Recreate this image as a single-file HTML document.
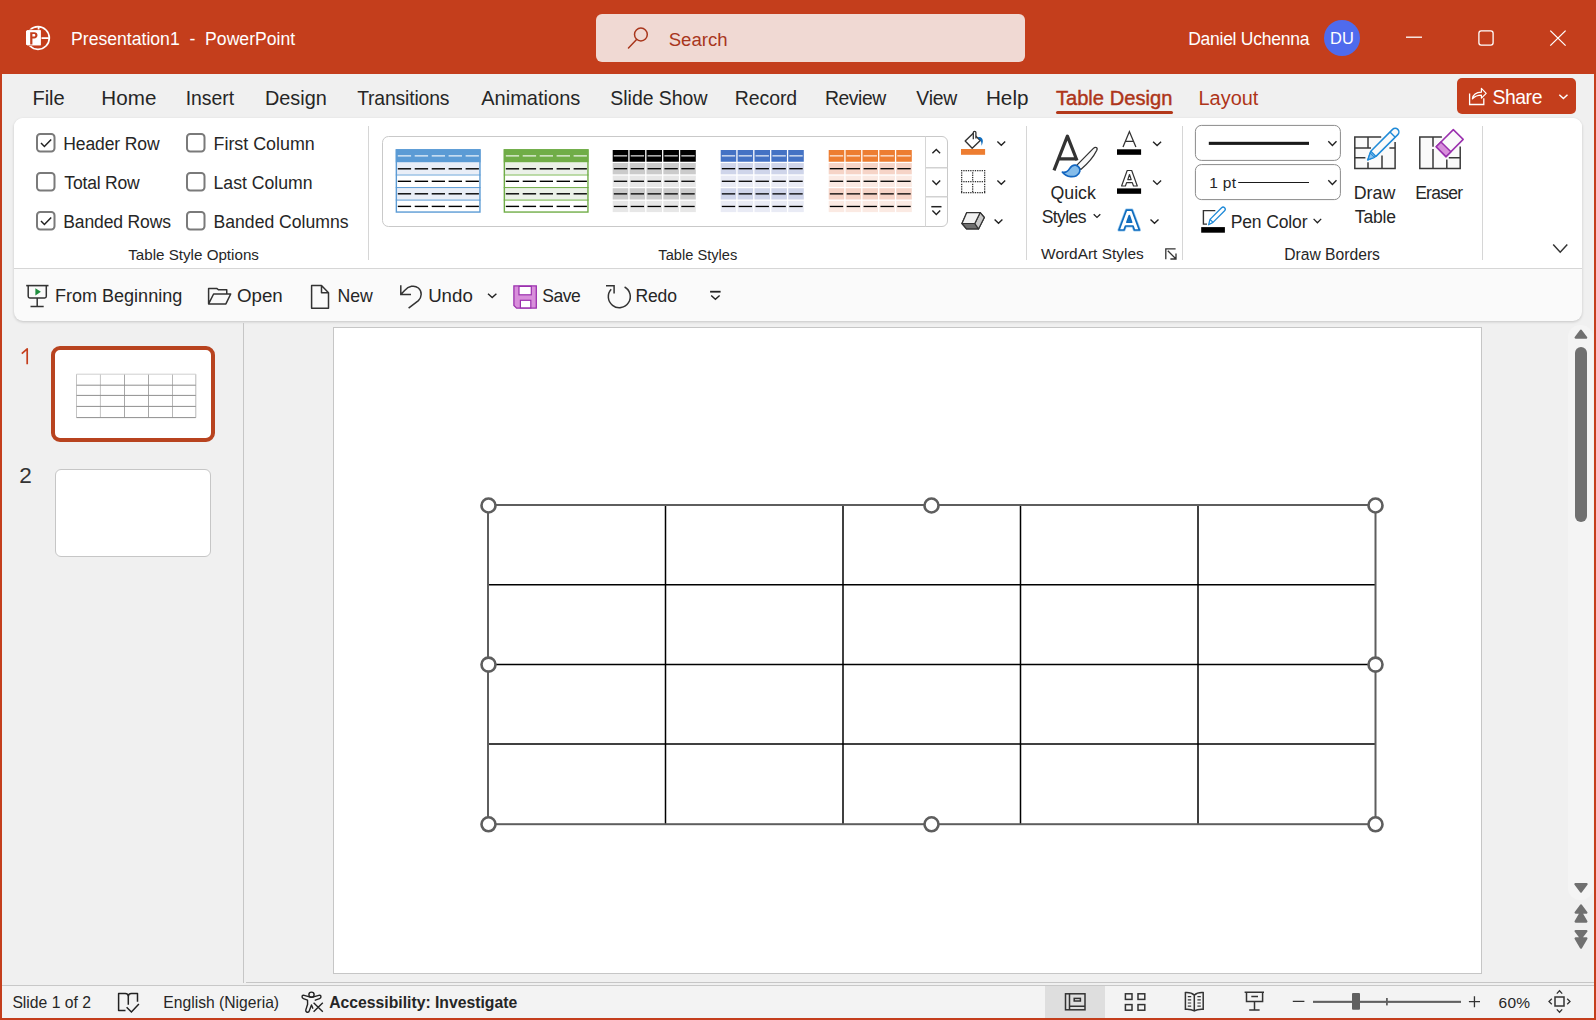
<!DOCTYPE html>
<html><head><meta charset="utf-8"><title>PowerPoint</title>
<style>
html,body{margin:0;padding:0;}
body{width:1596px;height:1020px;overflow:hidden;position:relative;background:#F0F0F0;font-family:"Liberation Sans",sans-serif;}
.t{position:absolute;white-space:pre;line-height:30px;font-family:"Liberation Sans",sans-serif;}
.a{position:absolute;}
svg{position:absolute;overflow:visible;}
</style></head><body>

<div class="a" style="left:0;top:0;width:1596px;height:74px;background:#C43E1C"></div>
<div class="a" style="left:0;top:0;width:2px;height:1020px;background:#C43E1C"></div>
<div class="a" style="left:1594px;top:0;width:2px;height:1020px;background:#C43E1C"></div>
<div class="a" style="left:0;top:1018px;width:1596px;height:2px;background:#C43E1C"></div>
<div class="a" style="left:596px;top:14px;width:429px;height:48px;border-radius:6px;background:#F0D9D3"></div>
<div class="a" style="left:1324px;top:20px;width:36px;height:36px;border-radius:50%;background:#4F6BED"></div>
<div class="a" style="left:1457px;top:78px;width:119px;height:36px;border-radius:5px;background:#C43E1C"></div>
<div class="a" style="left:1056px;top:111px;width:117px;height:3px;border-radius:2px;background:#B3381A"></div>
<div class="a" style="left:14px;top:118px;width:1568px;height:203px;border-radius:9px;background:#FAFAFA;box-shadow:0 1px 3px rgba(0,0,0,0.18);overflow:hidden">
  <div class="a" style="left:0;top:0;width:1568px;height:150px;background:#fff;border-bottom:1px solid #D6D6D6"></div>
</div>
<div class="a" style="left:368px;top:126px;width:1px;height:134px;background:#D6D6D6"></div>
<div class="a" style="left:1026px;top:126px;width:1px;height:134px;background:#D6D6D6"></div>
<div class="a" style="left:1182px;top:126px;width:1px;height:134px;background:#D6D6D6"></div>
<div class="a" style="left:1482px;top:126px;width:1px;height:134px;background:#D6D6D6"></div>
<div class="a" style="left:243px;top:323px;width:1px;height:660px;background:#C6C6C6"></div>
<div class="a" style="left:246px;top:982px;width:1348px;height:1px;background:#C6C6C6"></div>
<div class="a" style="left:2px;top:985px;width:1592px;height:33px;background:#F3F3F3;border-top:1px solid #C8C8C8;box-sizing:border-box"></div>
<div class="a" style="left:333px;top:327px;width:1149px;height:647px;background:#fff;border:1px solid #C6C6C6;box-sizing:border-box"></div>
<div class="a" style="left:51px;top:346px;width:164px;height:96px;border-radius:9px;background:#fff;border:4px solid #B8431F;box-sizing:border-box"></div>
<div class="a" style="left:55px;top:469px;width:156px;height:88px;border-radius:6px;background:#fff;border:1px solid #C6C6C6;box-sizing:border-box"></div>
<div class="a" style="left:1568px;top:325px;width:25px;height:575px;border-radius:12px;background:#F4F4F4"></div>
<div class="a" style="left:1575px;top:347px;width:12px;height:175px;border-radius:6px;background:#707070"></div>

<svg width="1596" height="1020" style="left:0;top:0"><circle cx="38" cy="38" r="11.3" fill="none" stroke="#fff" stroke-width="1.7"/>
<path d="M38.6 26.5V38.2H50" fill="none" stroke="#fff" stroke-width="1.8"/>
<path d="M27.3 30.2H40.7V45.2H27.3L26 44.2V31.2Z" fill="#fff" stroke="#C43E1C" stroke-width="1.6" paint-order="stroke"/>
<path d="M27.3 30.2H40.7V45.2H27.3L26 44.2V31.2Z" fill="#fff"/>
<path d="M30.2 44.6V32.2H34.2C36.3 32.2 37.5 33.4 37.5 35.3C37.5 37.3 36.2 38.5 34.1 38.5H32.4V44.6Z M32.4 34.1V36.6H33.8C34.8 36.6 35.3 36.2 35.3 35.35C35.3 34.5 34.8 34.1 33.8 34.1Z" fill="#C43E1C" fill-rule="evenodd"/>
<circle cx="640.9" cy="34.5" r="6.4" fill="none" stroke="#A8361C" stroke-width="1.5"/>
<path d="M636.6 39.6L628.5 47.9" stroke="#A8361C" stroke-width="1.5" stroke-linecap="round"/>
<path d="M1406 37.2H1422" stroke="#fff" stroke-width="1.3"/>
<rect x="1478.9" y="30.9" width="14.2" height="14.2" rx="2.3" fill="none" stroke="#fff" stroke-width="1.3"/>
<path d="M1550.3 30.6L1565.6 45.6M1565.6 30.6L1550.3 45.6" stroke="#fff" stroke-width="1.3"/>
<path d="M1469.6 93.4V104.5H1483.8V98.2" fill="none" stroke="#fff" stroke-width="1.3"/>
<path d="M1472.4 98.8C1473 94.6 1476 92.4 1481.4 92.2V88.4L1486.2 93.3L1481.4 98.1V95.2C1477.6 95.2 1474.8 96.4 1472.4 98.8Z" fill="none" stroke="#fff" stroke-width="1.2" stroke-linejoin="round"/>
<path d="M1559.3000000000002 94.75L1563.4 98.44999999999999L1567.5 94.75" fill="none" stroke="#fff" stroke-width="1.5"/>
<rect x="37" y="134" width="17.5" height="17.5" rx="3.2" fill="#fff" stroke="#7A7A7A" stroke-width="2"/><path d="M41 143L44.4 146.5L51.2 139.5" fill="none" stroke="#222" stroke-width="1.5"/>
<rect x="187" y="134" width="17.5" height="17.5" rx="3.2" fill="#fff" stroke="#7A7A7A" stroke-width="2"/>
<rect x="37" y="173" width="17.5" height="17.5" rx="3.2" fill="#fff" stroke="#7A7A7A" stroke-width="2"/>
<rect x="187" y="173" width="17.5" height="17.5" rx="3.2" fill="#fff" stroke="#7A7A7A" stroke-width="2"/>
<rect x="37" y="212" width="17.5" height="17.5" rx="3.2" fill="#fff" stroke="#7A7A7A" stroke-width="2"/><path d="M41 221L44.4 224.5L51.2 217.5" fill="none" stroke="#222" stroke-width="1.5"/>
<rect x="187" y="212" width="17.5" height="17.5" rx="3.2" fill="#fff" stroke="#7A7A7A" stroke-width="2"/>
<path d="M388.5 136.5H942A5.5 5.5 0 0 1 947.5 142V221A5.5 5.5 0 0 1 942 226.5H388.5A6 6 0 0 1 382.5 220.5V142.5A6 6 0 0 1 388.5 136.5Z" fill="#fff" stroke="#C9C9C9" stroke-width="1"/>
<path d="M925.5 136.5V226.5" stroke="#D6D6D6" stroke-width="1"/>
<path d="M926 167.7H947.5M926 196.7H947.5" stroke="#D2D2D2" stroke-width="1.6"/>
<path d="M932.4 153.2L936.3 149.4L940.1 153.2" fill="none" stroke="#222" stroke-width="1.4"/>
<path d="M932.4 180.4L936.3 184.4L940.1999999999999 180.4" fill="none" stroke="#222" stroke-width="1.4"/>
<path d="M931.3 206.7H941.5" stroke="#222" stroke-width="1.5"/>
<path d="M932.4 210.5L936.3 214.5L940.1999999999999 210.5" fill="none" stroke="#222" stroke-width="1.4"/>
<rect x="395.75" y="149.25" width="84.8" height="63.4" fill="#fff"/><rect x="395.75" y="149.25" width="84.8" height="13.25" fill="#5B9BD5"/><rect x="395.75" y="162.5" width="84.8" height="12.5375" fill="#E9EEF7"/><rect x="395.75" y="187.575" width="84.8" height="12.5375" fill="#E9EEF7"/><line x1="395.75" x2="480.55" y1="175.0375" y2="175.0375" stroke="#9DC3E6" stroke-width="1.6"/><line x1="395.75" x2="480.55" y1="200.1125" y2="200.1125" stroke="#9DC3E6" stroke-width="1.6"/><line x1="395.75" x2="480.55" y1="187.575" y2="187.575" stroke="#5B9BD5" stroke-width="1"/><rect x="396.35" y="149.85" width="83.60" height="62.20" fill="none" stroke="#5B9BD5" stroke-width="1.4"/><line x1="397.8" x2="411.1" y1="155.9" y2="155.9" stroke="#fff" stroke-width="1.1"/><line x1="414.7" x2="428.1" y1="155.9" y2="155.9" stroke="#fff" stroke-width="1.1"/><line x1="431.7" x2="445.0" y1="155.9" y2="155.9" stroke="#fff" stroke-width="1.1"/><line x1="448.6" x2="462.0" y1="155.9" y2="155.9" stroke="#fff" stroke-width="1.1"/><line x1="465.6" x2="478.9" y1="155.9" y2="155.9" stroke="#fff" stroke-width="1.1"/><line x1="397.8" x2="411.1" y1="168.8" y2="168.8" stroke="#000" stroke-width="1.4"/><line x1="414.7" x2="428.1" y1="168.8" y2="168.8" stroke="#000" stroke-width="1.4"/><line x1="431.7" x2="445.0" y1="168.8" y2="168.8" stroke="#000" stroke-width="1.4"/><line x1="448.6" x2="462.0" y1="168.8" y2="168.8" stroke="#000" stroke-width="1.4"/><line x1="465.6" x2="478.9" y1="168.8" y2="168.8" stroke="#000" stroke-width="1.4"/><line x1="397.8" x2="411.1" y1="181.3" y2="181.3" stroke="#000" stroke-width="1.4"/><line x1="414.7" x2="428.1" y1="181.3" y2="181.3" stroke="#000" stroke-width="1.4"/><line x1="431.7" x2="445.0" y1="181.3" y2="181.3" stroke="#000" stroke-width="1.4"/><line x1="448.6" x2="462.0" y1="181.3" y2="181.3" stroke="#000" stroke-width="1.4"/><line x1="465.6" x2="478.9" y1="181.3" y2="181.3" stroke="#000" stroke-width="1.4"/><line x1="397.8" x2="411.1" y1="193.8" y2="193.8" stroke="#000" stroke-width="1.4"/><line x1="414.7" x2="428.1" y1="193.8" y2="193.8" stroke="#000" stroke-width="1.4"/><line x1="431.7" x2="445.0" y1="193.8" y2="193.8" stroke="#000" stroke-width="1.4"/><line x1="448.6" x2="462.0" y1="193.8" y2="193.8" stroke="#000" stroke-width="1.4"/><line x1="465.6" x2="478.9" y1="193.8" y2="193.8" stroke="#000" stroke-width="1.4"/><line x1="397.8" x2="411.1" y1="206.4" y2="206.4" stroke="#000" stroke-width="1.4"/><line x1="414.7" x2="428.1" y1="206.4" y2="206.4" stroke="#000" stroke-width="1.4"/><line x1="431.7" x2="445.0" y1="206.4" y2="206.4" stroke="#000" stroke-width="1.4"/><line x1="448.6" x2="462.0" y1="206.4" y2="206.4" stroke="#000" stroke-width="1.4"/><line x1="465.6" x2="478.9" y1="206.4" y2="206.4" stroke="#000" stroke-width="1.4"/>
<rect x="503.75" y="149.25" width="84.8" height="63.4" fill="#fff"/><rect x="503.75" y="149.25" width="84.8" height="13.25" fill="#70AD47"/><rect x="503.75" y="162.5" width="84.8" height="12.5375" fill="#EBF1E8"/><rect x="503.75" y="187.575" width="84.8" height="12.5375" fill="#EBF1E8"/><line x1="503.75" x2="588.55" y1="175.0375" y2="175.0375" stroke="#A9D18E" stroke-width="1.6"/><line x1="503.75" x2="588.55" y1="200.1125" y2="200.1125" stroke="#A9D18E" stroke-width="1.6"/><line x1="503.75" x2="588.55" y1="187.575" y2="187.575" stroke="#70AD47" stroke-width="1"/><rect x="504.35" y="149.85" width="83.60" height="62.20" fill="none" stroke="#70AD47" stroke-width="1.4"/><line x1="505.8" x2="519.1" y1="155.9" y2="155.9" stroke="#fff" stroke-width="1.1"/><line x1="522.7" x2="536.1" y1="155.9" y2="155.9" stroke="#fff" stroke-width="1.1"/><line x1="539.7" x2="553.0" y1="155.9" y2="155.9" stroke="#fff" stroke-width="1.1"/><line x1="556.6" x2="570.0" y1="155.9" y2="155.9" stroke="#fff" stroke-width="1.1"/><line x1="573.6" x2="586.9" y1="155.9" y2="155.9" stroke="#fff" stroke-width="1.1"/><line x1="505.8" x2="519.1" y1="168.8" y2="168.8" stroke="#000" stroke-width="1.4"/><line x1="522.7" x2="536.1" y1="168.8" y2="168.8" stroke="#000" stroke-width="1.4"/><line x1="539.7" x2="553.0" y1="168.8" y2="168.8" stroke="#000" stroke-width="1.4"/><line x1="556.6" x2="570.0" y1="168.8" y2="168.8" stroke="#000" stroke-width="1.4"/><line x1="573.6" x2="586.9" y1="168.8" y2="168.8" stroke="#000" stroke-width="1.4"/><line x1="505.8" x2="519.1" y1="181.3" y2="181.3" stroke="#000" stroke-width="1.4"/><line x1="522.7" x2="536.1" y1="181.3" y2="181.3" stroke="#000" stroke-width="1.4"/><line x1="539.7" x2="553.0" y1="181.3" y2="181.3" stroke="#000" stroke-width="1.4"/><line x1="556.6" x2="570.0" y1="181.3" y2="181.3" stroke="#000" stroke-width="1.4"/><line x1="573.6" x2="586.9" y1="181.3" y2="181.3" stroke="#000" stroke-width="1.4"/><line x1="505.8" x2="519.1" y1="193.8" y2="193.8" stroke="#000" stroke-width="1.4"/><line x1="522.7" x2="536.1" y1="193.8" y2="193.8" stroke="#000" stroke-width="1.4"/><line x1="539.7" x2="553.0" y1="193.8" y2="193.8" stroke="#000" stroke-width="1.4"/><line x1="556.6" x2="570.0" y1="193.8" y2="193.8" stroke="#000" stroke-width="1.4"/><line x1="573.6" x2="586.9" y1="193.8" y2="193.8" stroke="#000" stroke-width="1.4"/><line x1="505.8" x2="519.1" y1="206.4" y2="206.4" stroke="#000" stroke-width="1.4"/><line x1="522.7" x2="536.1" y1="206.4" y2="206.4" stroke="#000" stroke-width="1.4"/><line x1="539.7" x2="553.0" y1="206.4" y2="206.4" stroke="#000" stroke-width="1.4"/><line x1="556.6" x2="570.0" y1="206.4" y2="206.4" stroke="#000" stroke-width="1.4"/><line x1="573.6" x2="586.9" y1="206.4" y2="206.4" stroke="#000" stroke-width="1.4"/>
<rect x="612.70" y="150.00" width="15.58" height="11.75" fill="#000000"/><line x1="613.80" x2="627.18" y1="155.88" y2="155.88" stroke="#fff" stroke-width="1.1"/><rect x="629.58" y="150.00" width="15.58" height="11.75" fill="#000000"/><line x1="630.68" x2="644.06" y1="155.88" y2="155.88" stroke="#fff" stroke-width="1.1"/><rect x="646.46" y="150.00" width="15.58" height="11.75" fill="#000000"/><line x1="647.56" x2="660.94" y1="155.88" y2="155.88" stroke="#fff" stroke-width="1.1"/><rect x="663.34" y="150.00" width="15.58" height="11.75" fill="#000000"/><line x1="664.44" x2="677.82" y1="155.88" y2="155.88" stroke="#fff" stroke-width="1.1"/><rect x="680.22" y="150.00" width="15.58" height="11.75" fill="#000000"/><line x1="681.32" x2="694.70" y1="155.88" y2="155.88" stroke="#fff" stroke-width="1.1"/><rect x="612.70" y="163.05" width="15.58" height="11.29" fill="#CBCBCB"/><line x1="613.80" x2="627.18" y1="168.69" y2="168.69" stroke="#000" stroke-width="1.3"/><rect x="629.58" y="163.05" width="15.58" height="11.29" fill="#CBCBCB"/><line x1="630.68" x2="644.06" y1="168.69" y2="168.69" stroke="#000" stroke-width="1.3"/><rect x="646.46" y="163.05" width="15.58" height="11.29" fill="#CBCBCB"/><line x1="647.56" x2="660.94" y1="168.69" y2="168.69" stroke="#000" stroke-width="1.3"/><rect x="663.34" y="163.05" width="15.58" height="11.29" fill="#CBCBCB"/><line x1="664.44" x2="677.82" y1="168.69" y2="168.69" stroke="#000" stroke-width="1.3"/><rect x="680.22" y="163.05" width="15.58" height="11.29" fill="#CBCBCB"/><line x1="681.32" x2="694.70" y1="168.69" y2="168.69" stroke="#000" stroke-width="1.3"/><rect x="612.70" y="175.64" width="15.58" height="11.29" fill="#E7E7E7"/><line x1="613.80" x2="627.18" y1="181.28" y2="181.28" stroke="#000" stroke-width="1.3"/><rect x="629.58" y="175.64" width="15.58" height="11.29" fill="#E7E7E7"/><line x1="630.68" x2="644.06" y1="181.28" y2="181.28" stroke="#000" stroke-width="1.3"/><rect x="646.46" y="175.64" width="15.58" height="11.29" fill="#E7E7E7"/><line x1="647.56" x2="660.94" y1="181.28" y2="181.28" stroke="#000" stroke-width="1.3"/><rect x="663.34" y="175.64" width="15.58" height="11.29" fill="#E7E7E7"/><line x1="664.44" x2="677.82" y1="181.28" y2="181.28" stroke="#000" stroke-width="1.3"/><rect x="680.22" y="175.64" width="15.58" height="11.29" fill="#E7E7E7"/><line x1="681.32" x2="694.70" y1="181.28" y2="181.28" stroke="#000" stroke-width="1.3"/><rect x="612.70" y="188.23" width="15.58" height="11.29" fill="#CBCBCB"/><line x1="613.80" x2="627.18" y1="193.87" y2="193.87" stroke="#000" stroke-width="1.3"/><rect x="629.58" y="188.23" width="15.58" height="11.29" fill="#CBCBCB"/><line x1="630.68" x2="644.06" y1="193.87" y2="193.87" stroke="#000" stroke-width="1.3"/><rect x="646.46" y="188.23" width="15.58" height="11.29" fill="#CBCBCB"/><line x1="647.56" x2="660.94" y1="193.87" y2="193.87" stroke="#000" stroke-width="1.3"/><rect x="663.34" y="188.23" width="15.58" height="11.29" fill="#CBCBCB"/><line x1="664.44" x2="677.82" y1="193.87" y2="193.87" stroke="#000" stroke-width="1.3"/><rect x="680.22" y="188.23" width="15.58" height="11.29" fill="#CBCBCB"/><line x1="681.32" x2="694.70" y1="193.87" y2="193.87" stroke="#000" stroke-width="1.3"/><rect x="612.70" y="200.81" width="15.58" height="11.29" fill="#E7E7E7"/><line x1="613.80" x2="627.18" y1="206.46" y2="206.46" stroke="#000" stroke-width="1.3"/><rect x="629.58" y="200.81" width="15.58" height="11.29" fill="#E7E7E7"/><line x1="630.68" x2="644.06" y1="206.46" y2="206.46" stroke="#000" stroke-width="1.3"/><rect x="646.46" y="200.81" width="15.58" height="11.29" fill="#E7E7E7"/><line x1="647.56" x2="660.94" y1="206.46" y2="206.46" stroke="#000" stroke-width="1.3"/><rect x="663.34" y="200.81" width="15.58" height="11.29" fill="#E7E7E7"/><line x1="664.44" x2="677.82" y1="206.46" y2="206.46" stroke="#000" stroke-width="1.3"/><rect x="680.22" y="200.81" width="15.58" height="11.29" fill="#E7E7E7"/><line x1="681.32" x2="694.70" y1="206.46" y2="206.46" stroke="#000" stroke-width="1.3"/>
<rect x="720.70" y="150.00" width="15.58" height="11.75" fill="#4472C4"/><line x1="721.80" x2="735.18" y1="155.88" y2="155.88" stroke="#fff" stroke-width="1.1"/><rect x="737.58" y="150.00" width="15.58" height="11.75" fill="#4472C4"/><line x1="738.68" x2="752.06" y1="155.88" y2="155.88" stroke="#fff" stroke-width="1.1"/><rect x="754.46" y="150.00" width="15.58" height="11.75" fill="#4472C4"/><line x1="755.56" x2="768.94" y1="155.88" y2="155.88" stroke="#fff" stroke-width="1.1"/><rect x="771.34" y="150.00" width="15.58" height="11.75" fill="#4472C4"/><line x1="772.44" x2="785.82" y1="155.88" y2="155.88" stroke="#fff" stroke-width="1.1"/><rect x="788.22" y="150.00" width="15.58" height="11.75" fill="#4472C4"/><line x1="789.32" x2="802.70" y1="155.88" y2="155.88" stroke="#fff" stroke-width="1.1"/><rect x="720.70" y="163.05" width="15.58" height="11.29" fill="#CFD5EA"/><line x1="721.80" x2="735.18" y1="168.69" y2="168.69" stroke="#000" stroke-width="1.3"/><rect x="737.58" y="163.05" width="15.58" height="11.29" fill="#CFD5EA"/><line x1="738.68" x2="752.06" y1="168.69" y2="168.69" stroke="#000" stroke-width="1.3"/><rect x="754.46" y="163.05" width="15.58" height="11.29" fill="#CFD5EA"/><line x1="755.56" x2="768.94" y1="168.69" y2="168.69" stroke="#000" stroke-width="1.3"/><rect x="771.34" y="163.05" width="15.58" height="11.29" fill="#CFD5EA"/><line x1="772.44" x2="785.82" y1="168.69" y2="168.69" stroke="#000" stroke-width="1.3"/><rect x="788.22" y="163.05" width="15.58" height="11.29" fill="#CFD5EA"/><line x1="789.32" x2="802.70" y1="168.69" y2="168.69" stroke="#000" stroke-width="1.3"/><rect x="720.70" y="175.64" width="15.58" height="11.29" fill="#E9EBF5"/><line x1="721.80" x2="735.18" y1="181.28" y2="181.28" stroke="#000" stroke-width="1.3"/><rect x="737.58" y="175.64" width="15.58" height="11.29" fill="#E9EBF5"/><line x1="738.68" x2="752.06" y1="181.28" y2="181.28" stroke="#000" stroke-width="1.3"/><rect x="754.46" y="175.64" width="15.58" height="11.29" fill="#E9EBF5"/><line x1="755.56" x2="768.94" y1="181.28" y2="181.28" stroke="#000" stroke-width="1.3"/><rect x="771.34" y="175.64" width="15.58" height="11.29" fill="#E9EBF5"/><line x1="772.44" x2="785.82" y1="181.28" y2="181.28" stroke="#000" stroke-width="1.3"/><rect x="788.22" y="175.64" width="15.58" height="11.29" fill="#E9EBF5"/><line x1="789.32" x2="802.70" y1="181.28" y2="181.28" stroke="#000" stroke-width="1.3"/><rect x="720.70" y="188.23" width="15.58" height="11.29" fill="#CFD5EA"/><line x1="721.80" x2="735.18" y1="193.87" y2="193.87" stroke="#000" stroke-width="1.3"/><rect x="737.58" y="188.23" width="15.58" height="11.29" fill="#CFD5EA"/><line x1="738.68" x2="752.06" y1="193.87" y2="193.87" stroke="#000" stroke-width="1.3"/><rect x="754.46" y="188.23" width="15.58" height="11.29" fill="#CFD5EA"/><line x1="755.56" x2="768.94" y1="193.87" y2="193.87" stroke="#000" stroke-width="1.3"/><rect x="771.34" y="188.23" width="15.58" height="11.29" fill="#CFD5EA"/><line x1="772.44" x2="785.82" y1="193.87" y2="193.87" stroke="#000" stroke-width="1.3"/><rect x="788.22" y="188.23" width="15.58" height="11.29" fill="#CFD5EA"/><line x1="789.32" x2="802.70" y1="193.87" y2="193.87" stroke="#000" stroke-width="1.3"/><rect x="720.70" y="200.81" width="15.58" height="11.29" fill="#E9EBF5"/><line x1="721.80" x2="735.18" y1="206.46" y2="206.46" stroke="#000" stroke-width="1.3"/><rect x="737.58" y="200.81" width="15.58" height="11.29" fill="#E9EBF5"/><line x1="738.68" x2="752.06" y1="206.46" y2="206.46" stroke="#000" stroke-width="1.3"/><rect x="754.46" y="200.81" width="15.58" height="11.29" fill="#E9EBF5"/><line x1="755.56" x2="768.94" y1="206.46" y2="206.46" stroke="#000" stroke-width="1.3"/><rect x="771.34" y="200.81" width="15.58" height="11.29" fill="#E9EBF5"/><line x1="772.44" x2="785.82" y1="206.46" y2="206.46" stroke="#000" stroke-width="1.3"/><rect x="788.22" y="200.81" width="15.58" height="11.29" fill="#E9EBF5"/><line x1="789.32" x2="802.70" y1="206.46" y2="206.46" stroke="#000" stroke-width="1.3"/>
<rect x="828.70" y="150.00" width="15.58" height="11.75" fill="#ED7D31"/><line x1="829.80" x2="843.18" y1="155.88" y2="155.88" stroke="#fff" stroke-width="1.1"/><rect x="845.58" y="150.00" width="15.58" height="11.75" fill="#ED7D31"/><line x1="846.68" x2="860.06" y1="155.88" y2="155.88" stroke="#fff" stroke-width="1.1"/><rect x="862.46" y="150.00" width="15.58" height="11.75" fill="#ED7D31"/><line x1="863.56" x2="876.94" y1="155.88" y2="155.88" stroke="#fff" stroke-width="1.1"/><rect x="879.34" y="150.00" width="15.58" height="11.75" fill="#ED7D31"/><line x1="880.44" x2="893.82" y1="155.88" y2="155.88" stroke="#fff" stroke-width="1.1"/><rect x="896.22" y="150.00" width="15.58" height="11.75" fill="#ED7D31"/><line x1="897.32" x2="910.70" y1="155.88" y2="155.88" stroke="#fff" stroke-width="1.1"/><rect x="828.70" y="163.05" width="15.58" height="11.29" fill="#F6D4C7"/><line x1="829.80" x2="843.18" y1="168.69" y2="168.69" stroke="#000" stroke-width="1.3"/><rect x="845.58" y="163.05" width="15.58" height="11.29" fill="#F6D4C7"/><line x1="846.68" x2="860.06" y1="168.69" y2="168.69" stroke="#000" stroke-width="1.3"/><rect x="862.46" y="163.05" width="15.58" height="11.29" fill="#F6D4C7"/><line x1="863.56" x2="876.94" y1="168.69" y2="168.69" stroke="#000" stroke-width="1.3"/><rect x="879.34" y="163.05" width="15.58" height="11.29" fill="#F6D4C7"/><line x1="880.44" x2="893.82" y1="168.69" y2="168.69" stroke="#000" stroke-width="1.3"/><rect x="896.22" y="163.05" width="15.58" height="11.29" fill="#F6D4C7"/><line x1="897.32" x2="910.70" y1="168.69" y2="168.69" stroke="#000" stroke-width="1.3"/><rect x="828.70" y="175.64" width="15.58" height="11.29" fill="#FBEAE3"/><line x1="829.80" x2="843.18" y1="181.28" y2="181.28" stroke="#000" stroke-width="1.3"/><rect x="845.58" y="175.64" width="15.58" height="11.29" fill="#FBEAE3"/><line x1="846.68" x2="860.06" y1="181.28" y2="181.28" stroke="#000" stroke-width="1.3"/><rect x="862.46" y="175.64" width="15.58" height="11.29" fill="#FBEAE3"/><line x1="863.56" x2="876.94" y1="181.28" y2="181.28" stroke="#000" stroke-width="1.3"/><rect x="879.34" y="175.64" width="15.58" height="11.29" fill="#FBEAE3"/><line x1="880.44" x2="893.82" y1="181.28" y2="181.28" stroke="#000" stroke-width="1.3"/><rect x="896.22" y="175.64" width="15.58" height="11.29" fill="#FBEAE3"/><line x1="897.32" x2="910.70" y1="181.28" y2="181.28" stroke="#000" stroke-width="1.3"/><rect x="828.70" y="188.23" width="15.58" height="11.29" fill="#F6D4C7"/><line x1="829.80" x2="843.18" y1="193.87" y2="193.87" stroke="#000" stroke-width="1.3"/><rect x="845.58" y="188.23" width="15.58" height="11.29" fill="#F6D4C7"/><line x1="846.68" x2="860.06" y1="193.87" y2="193.87" stroke="#000" stroke-width="1.3"/><rect x="862.46" y="188.23" width="15.58" height="11.29" fill="#F6D4C7"/><line x1="863.56" x2="876.94" y1="193.87" y2="193.87" stroke="#000" stroke-width="1.3"/><rect x="879.34" y="188.23" width="15.58" height="11.29" fill="#F6D4C7"/><line x1="880.44" x2="893.82" y1="193.87" y2="193.87" stroke="#000" stroke-width="1.3"/><rect x="896.22" y="188.23" width="15.58" height="11.29" fill="#F6D4C7"/><line x1="897.32" x2="910.70" y1="193.87" y2="193.87" stroke="#000" stroke-width="1.3"/><rect x="828.70" y="200.81" width="15.58" height="11.29" fill="#FBEAE3"/><line x1="829.80" x2="843.18" y1="206.46" y2="206.46" stroke="#000" stroke-width="1.3"/><rect x="845.58" y="200.81" width="15.58" height="11.29" fill="#FBEAE3"/><line x1="846.68" x2="860.06" y1="206.46" y2="206.46" stroke="#000" stroke-width="1.3"/><rect x="862.46" y="200.81" width="15.58" height="11.29" fill="#FBEAE3"/><line x1="863.56" x2="876.94" y1="206.46" y2="206.46" stroke="#000" stroke-width="1.3"/><rect x="879.34" y="200.81" width="15.58" height="11.29" fill="#FBEAE3"/><line x1="880.44" x2="893.82" y1="206.46" y2="206.46" stroke="#000" stroke-width="1.3"/><rect x="896.22" y="200.81" width="15.58" height="11.29" fill="#FBEAE3"/><line x1="897.32" x2="910.70" y1="206.46" y2="206.46" stroke="#000" stroke-width="1.3"/>
<path d="M965.2 141.1L973 133.4L980.3 140.4L972.2 148.2Z" fill="#fff" stroke="#333" stroke-width="1.4" stroke-linejoin="round"/>
<path d="M973.3 139.2V132.6A1.3 1.3 0 0 1 975.9 132.6V138.6" fill="#fff" stroke="#333" stroke-width="1.3"/>
<path d="M977.8 137.5C980 136.2 982.5 137.8 982.8 140.6C983 142.2 982.4 144.2 981.5 145.8C981.6 143.6 981.4 141.2 979.6 139.6Z" fill="#0F6CBD"/>
<rect x="961" y="149" width="24.1" height="5.8" fill="#ED7D31"/>
<path d="M997.4 141.5L1001.3 145.3L1005.1999999999999 141.5" fill="none" stroke="#222" stroke-width="1.4"/>
<g fill="#333"><rect x="961.00" y="170.00" width="1.3" height="1.3"/><rect x="961.00" y="181.00" width="1.3" height="1.3"/><rect x="961.00" y="192.00" width="1.3" height="1.3"/><rect x="963.30" y="170.00" width="1.3" height="1.3"/><rect x="963.30" y="181.00" width="1.3" height="1.3"/><rect x="963.30" y="192.00" width="1.3" height="1.3"/><rect x="965.60" y="170.00" width="1.3" height="1.3"/><rect x="965.60" y="181.00" width="1.3" height="1.3"/><rect x="965.60" y="192.00" width="1.3" height="1.3"/><rect x="967.90" y="170.00" width="1.3" height="1.3"/><rect x="967.90" y="181.00" width="1.3" height="1.3"/><rect x="967.90" y="192.00" width="1.3" height="1.3"/><rect x="970.20" y="170.00" width="1.3" height="1.3"/><rect x="970.20" y="181.00" width="1.3" height="1.3"/><rect x="970.20" y="192.00" width="1.3" height="1.3"/><rect x="972.50" y="170.00" width="1.3" height="1.3"/><rect x="972.50" y="181.00" width="1.3" height="1.3"/><rect x="972.50" y="192.00" width="1.3" height="1.3"/><rect x="974.80" y="170.00" width="1.3" height="1.3"/><rect x="974.80" y="181.00" width="1.3" height="1.3"/><rect x="974.80" y="192.00" width="1.3" height="1.3"/><rect x="977.10" y="170.00" width="1.3" height="1.3"/><rect x="977.10" y="181.00" width="1.3" height="1.3"/><rect x="977.10" y="192.00" width="1.3" height="1.3"/><rect x="979.40" y="170.00" width="1.3" height="1.3"/><rect x="979.40" y="181.00" width="1.3" height="1.3"/><rect x="979.40" y="192.00" width="1.3" height="1.3"/><rect x="981.70" y="170.00" width="1.3" height="1.3"/><rect x="981.70" y="181.00" width="1.3" height="1.3"/><rect x="981.70" y="192.00" width="1.3" height="1.3"/><rect x="984.00" y="170.00" width="1.3" height="1.3"/><rect x="984.00" y="181.00" width="1.3" height="1.3"/><rect x="984.00" y="192.00" width="1.3" height="1.3"/><rect x="961.00" y="172.30" width="1.3" height="1.3"/><rect x="972.00" y="172.30" width="1.3" height="1.3"/><rect x="984.00" y="172.30" width="1.3" height="1.3"/><rect x="961.00" y="174.60" width="1.3" height="1.3"/><rect x="972.00" y="174.60" width="1.3" height="1.3"/><rect x="984.00" y="174.60" width="1.3" height="1.3"/><rect x="961.00" y="176.90" width="1.3" height="1.3"/><rect x="972.00" y="176.90" width="1.3" height="1.3"/><rect x="984.00" y="176.90" width="1.3" height="1.3"/><rect x="961.00" y="179.20" width="1.3" height="1.3"/><rect x="972.00" y="179.20" width="1.3" height="1.3"/><rect x="984.00" y="179.20" width="1.3" height="1.3"/><rect x="961.00" y="183.80" width="1.3" height="1.3"/><rect x="972.00" y="183.80" width="1.3" height="1.3"/><rect x="984.00" y="183.80" width="1.3" height="1.3"/><rect x="961.00" y="186.10" width="1.3" height="1.3"/><rect x="972.00" y="186.10" width="1.3" height="1.3"/><rect x="984.00" y="186.10" width="1.3" height="1.3"/><rect x="961.00" y="188.40" width="1.3" height="1.3"/><rect x="972.00" y="188.40" width="1.3" height="1.3"/><rect x="984.00" y="188.40" width="1.3" height="1.3"/><rect x="961.00" y="190.70" width="1.3" height="1.3"/><rect x="972.00" y="190.70" width="1.3" height="1.3"/><rect x="984.00" y="190.70" width="1.3" height="1.3"/></g>
<path d="M997.4 180.5L1001.3 184.3L1005.1999999999999 180.5" fill="none" stroke="#222" stroke-width="1.4"/>
<path d="M966.8 212.6H980.2L984.3 217.5L978.5 228.9H966.5L962 223.5Z" fill="#fff" stroke="#333" stroke-width="1.3" stroke-linejoin="round"/>
<path d="M962 223.5H974.8L978.5 228.9H966.5Z" fill="#6E6E6E" stroke="#333" stroke-width="1.2" stroke-linejoin="round"/>
<path d="M974.8 223.5L980.2 212.6L984.3 217.5L978.5 228.9Z" fill="#C8C8C8" stroke="#333" stroke-width="1.2" stroke-linejoin="round"/>
<path d="M966.8 212.6L962 223.5H974.8L980.2 212.6Z" fill="#F2F2F2" stroke="#333" stroke-width="1.2" stroke-linejoin="round"/>
<path d="M994.6 219.5L998.5 223.3L1002.4 219.5" fill="none" stroke="#222" stroke-width="1.4"/>
<path d="M1054 170.3L1067.4 136.2L1077 160.5M1058.8 158.9H1075.2" fill="none" stroke="#333" stroke-width="3.2" stroke-linejoin="round"/>
<path d="M1076.4 165.6L1093.4 148.4C1095.4 146.4 1098 147.4 1096.8 150.2C1093.6 156.6 1087.8 163.6 1080.8 169.4Z" fill="#FAFAFA" stroke="#333" stroke-width="1.3" stroke-linejoin="round"/>
<path d="M1062.4 172.2C1066 172.8 1068.2 171 1069.6 168.6C1071.2 166 1073.2 164.8 1075.6 165.2C1078.6 165.8 1080.4 168.6 1079.8 171.4C1079 175.4 1074.6 177 1070.6 176.6C1067.4 176.2 1064.6 174.8 1062.4 172.2Z" fill="#84BCEA" stroke="#1366C0" stroke-width="1.7" stroke-linejoin="round"/>
<path d="M1093.7 214.20000000000002L1097 217.4L1100.3 214.20000000000002" fill="none" stroke="#222" stroke-width="1.3"/>
<path d="M1123 147.1L1129.4 131.6L1135.9 147.1M1125.2 141.4H1133.6" fill="none" stroke="#333" stroke-width="1.3"/>
<rect x="1117" y="149.3" width="24.1" height="5.5" fill="#000"/>
<path d="M1153.1 141.7L1157.1 145.5L1161.1 141.7" fill="none" stroke="#222" stroke-width="1.4"/>
<path d="M1121.6 186L1127.2 170.5H1131.7L1137.3 186H1133.5L1132.3 182.6H1126.6L1125.4 186Z M1127.8 179.6H1131.2L1129.5 174.5Z" fill="#fff" stroke="#333" stroke-width="1.2" stroke-linejoin="round"/>
<rect x="1117" y="188.4" width="24.1" height="5.4" fill="#000"/>
<path d="M1153.1 180.6L1157.1 184.4L1161.1 180.6" fill="none" stroke="#222" stroke-width="1.4"/>
<path d="M1119 230L1126.4 210.2H1132L1139.4 230H1134.4L1133 226H1125.5L1124 230Z M1126.9 222.2H1131.6L1129.3 215.6Z" fill="#fff" stroke="#9CCBF0" stroke-width="3.2" stroke-linejoin="round"/>
<path d="M1119 230L1126.4 210.2H1132L1139.4 230H1134.4L1133 226H1125.5L1124 230Z M1126.9 222.2H1131.6L1129.3 215.6Z" fill="#fff" stroke="#0F6CBD" stroke-width="1.7" stroke-linejoin="round"/>
<path d="M1127.6 221.6H1131L1129.3 216.2Z" fill="#0F6CBD"/>
<path d="M1150.5 219.4L1154.5 223.20000000000002L1158.5 219.4" fill="none" stroke="#222" stroke-width="1.4"/>
<path d="M1165.8 259.2V248.8H1175.6M1167.8 250.8L1175.8 258.8M1170.4 259H1176V253.4" fill="none" stroke="#333" stroke-width="1.3"/>
<rect x="1195.4" y="125.4" width="145" height="35" rx="6" fill="#fff" stroke="#8A8A8A" stroke-width="1"/>
<rect x="1195.4" y="164.6" width="145" height="35" rx="6" fill="#fff" stroke="#8A8A8A" stroke-width="1"/>
<rect x="1208.8" y="141.8" width="100.2" height="3.1" fill="#1A1A1A"/>
<path d="M1328.3000000000002 141.3L1332.4 145.5L1336.5 141.3" fill="none" stroke="#222" stroke-width="1.4"/>
<rect x="1238.2" y="182" width="70.8" height="1" fill="#1A1A1A"/>
<path d="M1328.3000000000002 180.3L1332.4 184.5L1336.5 180.3" fill="none" stroke="#222" stroke-width="1.4"/>
<path d="M1215.3 210.6H1203.4V224.1H1207" fill="none" stroke="#333" stroke-width="1.4"/>
<path d="M1208.6 224.8L1210 219.4L1221.6 207.8A2.1 2.1 0 0 1 1224.6 210.8L1213 222.4Z M1210 219.4L1213 222.4" fill="#fff" stroke="#1F8AD8" stroke-width="1.3" stroke-linejoin="round"/>
<rect x="1201.2" y="227.1" width="23.7" height="5.6" fill="#000"/>
<path d="M1313.6000000000001 218.85000000000002L1317.4 222.75L1321.2 218.85000000000002" fill="none" stroke="#222" stroke-width="1.3"/>
<g fill="none" stroke="#3A3A3A" stroke-width="1.5"><rect x="1354.8" y="137.1" width="40.3" height="31.5" fill="#FAFAFA" stroke="none"/><path d="M1381.2 137.1H1354.8V168.6H1395.1V142"/><path d="M1368 137.1V148M1368 162.3V168.6M1382 155.4V168.6M1354.8 147.9H1371M1389.4 147.9H1395.1M1354.8 157.8H1365.4"/></g>
<path d="M1367.8 159.9L1370.8 151.2L1392.6 129.4A3.6 3.6 0 0 1 1397.8 134.6L1376 156.4Z" fill="#FAFAFA" stroke="#1F8AD8" stroke-width="1.5" stroke-linejoin="round"/>
<path d="M1367.8 159.9L1370.2 152.8L1374.6 157.4Z" fill="#8EC3EE" stroke="#1F8AD8" stroke-width="1.2" stroke-linejoin="round"/>
<path d="M1370.8 151.2L1376 156.4M1390 132L1395.2 137.2" fill="none" stroke="#1F8AD8" stroke-width="1.4"/>
<g fill="none" stroke="#3A3A3A" stroke-width="1.5"><rect x="1419.8" y="137.1" width="40.4" height="31.5" fill="#FAFAFA" stroke="none"/><path d="M1441.9 137.1H1419.8V168.6H1460.2V146.4"/><path d="M1433 137.1V146.8M1433 148.9V168.6M1446.8 159.5V168.6M1448.8 157.8H1460.2"/></g>
<path d="M1436.2 146.8L1453.3 129.6L1463.2 139.4L1446 156.6Z" fill="#FAFAFA" stroke="#9A30AE" stroke-width="1.5" stroke-linejoin="round"/>
<path d="M1436.2 146.8L1441 142L1450.9 151.8L1446 156.6Z" fill="#D78FDB" stroke="#9A30AE" stroke-width="1.5" stroke-linejoin="round"/>
<path d="M1553.2 244.5L1560.2 252.2L1567.3 244.5" fill="none" stroke="#333" stroke-width="1.5"/>
<path d="M26.2 285.6H48.5" stroke="#333" stroke-width="1.6"/>
<path d="M28.2 285.6V296.3A1.6 1.6 0 0 0 29.8 297.9H44.7A1.6 1.6 0 0 0 46.3 296.3V285.6M37.2 297.9V306.6M30.5 306.6H43.7" fill="none" stroke="#333" stroke-width="1.5"/>
<path d="M35.4 288.2L40.9 291.8L35.4 295.4Z" fill="#1E8E3E"/>
<path d="M208.6 303.9V288.6H217L218.4 289.8H226.75V294M208.6 303.9L213.6 294H230.7L225.9 303.9Z" fill="none" stroke="#333" stroke-width="1.5" stroke-linejoin="round"/>
<path d="M311.6 285.4H321.5L328.5 292.7V308.2H311.6Z M321.5 285.4V292.7H328.5" fill="none" stroke="#333" stroke-width="1.5" stroke-linejoin="round"/>
<path d="M400.8 285.2V294.6H411M400.8 294.6L404.6 290.4C408.6 286.2 414.2 284.6 418.4 288C422.6 291.6 421.6 297.4 418.4 300.6L408.6 308.2" fill="none" stroke="#333" stroke-width="1.5"/>
<path d="M488.0 293.70000000000005L492.2 297.5L496.4 293.70000000000005" fill="none" stroke="#222" stroke-width="1.4"/>
<path d="M513.9 285.9H536.3V308.1H516.6L513.9 305.4Z" fill="#D88FDB" stroke="#9B30AE" stroke-width="1.3"/>
<rect x="519" y="286.4" width="12.3" height="8.4" fill="#fff" stroke="#9B30AE" stroke-width="1.2"/>
<rect x="520.4" y="300.3" width="10.4" height="7.6" fill="#fff" stroke="#9B30AE" stroke-width="1.2"/>
<path d="M624.6 287A11 11 0 1 1 611.2 289.2" fill="none" stroke="#333" stroke-width="1.5"/>
<path d="M606 285.7H614.1V293.6" fill="none" stroke="#333" stroke-width="1.5"/>
<path d="M710.1 291.7H720.6" stroke="#222" stroke-width="1.8"/>
<path d="M711.1999999999999 295.45L715.4 299.34999999999997L719.6 295.45" fill="none" stroke="#222" stroke-width="1.4"/>
<path d="M21.8 353.6L27.2 348.9V364.2" fill="none" stroke="#C43E1C" stroke-width="1.7" stroke-linejoin="round"/>
<g stroke-width="1" fill="none"><path d="M76.5 374.2V417.6" stroke="#C4C4C4"/><path d="M100.4 374.2V417.6" stroke="#C4C4C4"/><path d="M124.5 374.2V417.6" stroke="#A8A8A8"/><path d="M148.5 374.2V417.6" stroke="#A8A8A8"/><path d="M172.5 374.2V417.6" stroke="#B8B8B8"/><path d="M195.8 374.2V417.6" stroke="#B8B8B8"/><path d="M76.5 374.2H195.8" stroke="#CFCFCF"/><path d="M76.5 385.2H195.8" stroke="#8F8F8F"/><path d="M76.5 395.4H195.8" stroke="#8F8F8F"/><path d="M76.5 406.4H195.8" stroke="#8F8F8F"/><path d="M76.5 417.6H195.8" stroke="#8F8F8F"/></g>
<g stroke="#000" stroke-width="1.5" fill="none"><path d="M665.5 505V824.2"/><path d="M843 505V824.2"/><path d="M1020.5 505V824.2"/><path d="M1198 505V824.2"/><path d="M488 584.7H1375.5"/><path d="M488 664.4H1375.5"/><path d="M488 744.1H1375.5"/></g>
<rect x="488" y="505" width="887.5" height="319.20000000000005" fill="none" stroke="#5E5E5E" stroke-width="2"/>
<circle cx="488.5" cy="505.5" r="7" fill="#fff" stroke="#5E5E5E" stroke-width="2.6"/>
<circle cx="488.5" cy="664.6" r="7" fill="#fff" stroke="#5E5E5E" stroke-width="2.6"/>
<circle cx="488.5" cy="824.3" r="7" fill="#fff" stroke="#5E5E5E" stroke-width="2.6"/>
<circle cx="931.5" cy="505.5" r="7" fill="#fff" stroke="#5E5E5E" stroke-width="2.6"/>
<circle cx="931.5" cy="824.3" r="7" fill="#fff" stroke="#5E5E5E" stroke-width="2.6"/>
<circle cx="1375.5" cy="505.5" r="7" fill="#fff" stroke="#5E5E5E" stroke-width="2.6"/>
<circle cx="1375.5" cy="664.6" r="7" fill="#fff" stroke="#5E5E5E" stroke-width="2.6"/>
<circle cx="1375.5" cy="824.3" r="7" fill="#fff" stroke="#5E5E5E" stroke-width="2.6"/>
<path d="M1580.9 330.6L1586.2 337.6H1575.6Z" fill="#707070" stroke="#707070" stroke-width="2.2" stroke-linejoin="round"/>
<path d="M1575.4 884.2H1586.6L1581 891.6Z" fill="#707070" stroke="#707070" stroke-width="2.2" stroke-linejoin="round"/>
<path d="M1581 905.4L1586.4 912.6H1575.6Z M1581 912.2L1586.4 921.6H1575.6Z" fill="#707070" stroke="#707070" stroke-width="2.2" stroke-linejoin="round"/>
<path d="M1575.6 931.2H1586.4L1581 938.2Z M1575.6 938.4H1586.4L1581 947.6Z" fill="#707070" stroke="#707070" stroke-width="2.2" stroke-linejoin="round"/>
<path d="M125.5 1010.5H118.6V993.4H125.2C126.9 993.4 128.3 994.8 128.3 996.5V1004.8M128.3 996.5C128.3 994.8 129.7 993.4 131.4 993.4H137.5V1001.7" fill="none" stroke="#222" stroke-width="1.5" stroke-linejoin="round"/>
<path d="M126.6 1007.2L131.4 1012L138.9 1003.9" fill="none" stroke="#222" stroke-width="1.5"/>
<circle cx="311.5" cy="994.7" r="2.6" fill="none" stroke="#222" stroke-width="1.4"/>
<path d="M315.3 1000.2L319.6 998.6C321.8 997.8 321.2 994.6 318.8 995.3L314.4 996.6C312.6 997.2 310.4 997.2 308.6 996.6L304.2 995.3C301.8 994.6 301.2 997.8 303.4 998.6L307.5 1000.1L307.6 1004.2L305.9 1009.6C305 1012.6 308.8 1013.2 309.4 1010.6L311.5 1004.9L312.8 1008.2" fill="none" stroke="#222" stroke-width="1.4" stroke-linejoin="round" stroke-linecap="round"/>
<path d="M313.6 1002.8L322.8 1011.8M322.8 1002.8L313.6 1011.8" fill="none" stroke="#222" stroke-width="1.4"/>
<rect x="1045" y="986" width="60" height="32" fill="#DEDEDE"/>
<g fill="none" stroke="#333" stroke-width="1.5"><rect x="1065.5" y="993.8" width="19.5" height="16"/><path d="M1069.5 993.8V1009.8M1069.5 1006.3H1085"/><rect x="1074.2" y="998.4" width="6.2" height="2.6"/><rect x="1125.4" y="993.8" width="6.6" height="5.6"/><rect x="1138" y="993.8" width="6.8" height="5.6"/><rect x="1125.4" y="1004.6" width="6.6" height="5.6"/><rect x="1138" y="1004.6" width="6.8" height="5.6"/><path d="M1194.3 995.2C1191.6 992.6 1188.4 992.4 1185.4 992.6V1009.2C1188.4 1009 1191.6 1009.2 1194.3 1010.8C1197 1009.2 1200.2 1009 1203.2 1009.2V992.6C1200.2 992.4 1197 992.6 1194.3 995.2Z M1194.3 995.2V1010.8"/><path d="M1244.6 992.2H1264M1246.5 992.2V1001.6H1262.6V992.2M1251.3 996.6H1258M1254.5 1001.6V1010M1249.2 1010H1259.6"/></g>
<path d="M1187.8 996.6H1191.2M1187.8 999.8H1191.2M1187.8 1003H1191.2M1187.8 1006.2H1191.2M1197.4 996.6H1200.8M1197.4 999.8H1200.8M1197.4 1003H1200.8M1197.4 1006.2H1200.8" stroke="#333" stroke-width="1.2"/>
<path d="M1292.8 1001.4H1304.4M1468.9 1001.6H1480M1474.45 996.2V1007.2" stroke="#333" stroke-width="1.3"/>
<rect x="1313" y="1000.8" width="148" height="2.1" fill="#606060"/>
<rect x="1386" y="998" width="1.8" height="7.4" fill="#606060"/>
<rect x="1352" y="993" width="8" height="16.7" rx="1" fill="#606060"/>
<rect x="1555" y="997" width="9" height="9" fill="none" stroke="#333" stroke-width="1.5"/>
<path d="M1556.8 993.6L1559.5 990.8L1562.2 993.6M1556.8 1009.4L1559.5 1012.2L1562.2 1009.4M1551.8 998.8L1549 1001.5L1551.8 1004.2M1567.2 998.8L1570 1001.5L1567.2 1004.2" fill="none" stroke="#333" stroke-width="1.3"/></svg>
<div class="t" style="left:71.03px;top:24px;font-size:17.61px;letter-spacing:0.0px;color:#ffffff;font-weight:400;">Presentation1  -  PowerPoint</div>
<div class="t" style="left:668.69px;top:25px;font-size:18.58px;letter-spacing:0.0px;color:#A8361C;font-weight:400;">Search</div>
<div class="t" style="left:1188.13px;top:24px;font-size:17.55px;letter-spacing:-0.263px;color:#ffffff;font-weight:400;">Daniel Uchenna</div>
<div class="t" style="left:1330.11px;top:23px;font-size:16.41px;letter-spacing:0.0px;color:#ffffff;font-weight:400;">DU</div>
<div class="t" style="left:32.44px;top:83px;font-size:20.1px;letter-spacing:-0.04px;color:#262626;font-weight:400;">File</div>
<div class="t" style="left:101.31px;top:83px;font-size:20.6px;letter-spacing:0.042px;color:#262626;font-weight:400;">Home</div>
<div class="t" style="left:185.66px;top:83px;font-size:19.39px;letter-spacing:-0.006px;color:#262626;font-weight:400;">Insert</div>
<div class="t" style="left:265.04px;top:83px;font-size:19.85px;letter-spacing:-0.012px;color:#262626;font-weight:400;">Design</div>
<div class="t" style="left:357.13px;top:83px;font-size:19.35px;letter-spacing:-0.15px;color:#262626;font-weight:400;">Transitions</div>
<div class="t" style="left:481.28px;top:83px;font-size:20.03px;letter-spacing:0.0px;color:#262626;font-weight:400;">Animations</div>
<div class="t" style="left:610.35px;top:83px;font-size:19.43px;letter-spacing:-0.012px;color:#262626;font-weight:400;">Slide Show</div>
<div class="t" style="left:734.87px;top:83px;font-size:19.42px;letter-spacing:-0.055px;color:#262626;font-weight:400;">Record</div>
<div class="t" style="left:825.07px;top:83px;font-size:19.35px;letter-spacing:-0.459px;color:#262626;font-weight:400;">Review</div>
<div class="t" style="left:916.37px;top:83px;font-size:19.35px;letter-spacing:-0.199px;color:#262626;font-weight:400;">View</div>
<div class="t" style="left:985.89px;top:83px;font-size:20.71px;letter-spacing:0.021px;color:#262626;font-weight:400;">Help</div>
<div class="t" style="left:1055.88px;top:83px;font-size:20.13px;letter-spacing:0.021px;color:#AE3519;font-weight:400;-webkit-text-stroke:0.45px #AE3519;">Table Design</div>
<div class="t" style="left:1198.54px;top:83px;font-size:19.96px;letter-spacing:-0.004px;color:#AE3519;font-weight:400;">Layout</div>
<div class="t" style="left:1492.45px;top:82px;font-size:19.35px;letter-spacing:-0.412px;color:#ffffff;font-weight:400;">Share</div>
<div class="t" style="left:63.33px;top:129px;font-size:17.55px;letter-spacing:-0.137px;color:#262626;font-weight:400;">Header Row</div>
<div class="t" style="left:213.5px;top:129px;font-size:17.88px;letter-spacing:0.006px;color:#262626;font-weight:400;">First Column</div>
<div class="t" style="left:64.36px;top:168px;font-size:17.55px;letter-spacing:-0.196px;color:#262626;font-weight:400;">Total Row</div>
<div class="t" style="left:213.5px;top:168px;font-size:17.65px;letter-spacing:0.003px;color:#262626;font-weight:400;">Last Column</div>
<div class="t" style="left:63.33px;top:207px;font-size:17.55px;letter-spacing:-0.154px;color:#262626;font-weight:400;">Banded Rows</div>
<div class="t" style="left:213.53px;top:207px;font-size:17.62px;letter-spacing:-0.003px;color:#262626;font-weight:400;">Banded Columns</div>
<div class="t" style="left:128.21px;top:240px;font-size:15.18px;letter-spacing:0.0px;color:#262626;font-weight:400;">Table Style Options</div>
<div class="t" style="left:658.32px;top:240px;font-size:14.65px;letter-spacing:0.0px;color:#262626;font-weight:400;">Table Styles</div>
<div class="t" style="left:1050.52px;top:178px;font-size:17.73px;letter-spacing:0.008px;color:#262626;font-weight:400;">Quick</div>
<div class="t" style="left:1041.63px;top:202px;font-size:17.55px;letter-spacing:-0.564px;color:#262626;font-weight:400;">Styles</div>
<div class="t" style="left:1041.11px;top:239px;font-size:15.43px;letter-spacing:0.0px;color:#262626;font-weight:400;">WordArt Styles</div>
<div class="t" style="left:1209.33px;top:168px;font-size:15.5px;letter-spacing:0.281px;color:#262626;font-weight:400;">1 pt</div>
<div class="t" style="left:1230.63px;top:207px;font-size:17.55px;letter-spacing:-0.137px;color:#262626;font-weight:400;">Pen Color</div>
<div class="t" style="left:1353.8px;top:178px;font-size:17.82px;letter-spacing:-0.038px;color:#262626;font-weight:400;">Draw</div>
<div class="t" style="left:1354.86px;top:202px;font-size:17.55px;letter-spacing:-0.211px;color:#262626;font-weight:400;">Table</div>
<div class="t" style="left:1415.13px;top:178px;font-size:17.55px;letter-spacing:-0.752px;color:#262626;font-weight:400;">Eraser</div>
<div class="t" style="left:1284.15px;top:240px;font-size:15.68px;letter-spacing:0.0px;color:#262626;font-weight:400;">Draw Borders</div>
<div class="t" style="left:54.89px;top:281px;font-size:18.06px;letter-spacing:-0.001px;color:#262626;font-weight:400;">From Beginning</div>
<div class="t" style="left:236.91px;top:281px;font-size:18.76px;letter-spacing:-0.015px;color:#262626;font-weight:400;">Open</div>
<div class="t" style="left:337.4px;top:281px;font-size:17.7px;letter-spacing:0.006px;color:#262626;font-weight:400;">New</div>
<div class="t" style="left:428.13px;top:281px;font-size:18.71px;letter-spacing:0.001px;color:#262626;font-weight:400;">Undo</div>
<div class="t" style="left:542.23px;top:281px;font-size:17.55px;letter-spacing:-0.5px;color:#262626;font-weight:400;">Save</div>
<div class="t" style="left:635.43px;top:281px;font-size:17.55px;letter-spacing:-0.13px;color:#262626;font-weight:400;">Redo</div>
<div class="t" style="left:19.18px;top:461px;font-size:22.6px;letter-spacing:0.0px;color:#333333;font-weight:400;">2</div>
<div class="t" style="left:12.39px;top:988px;font-size:15.73px;letter-spacing:0.0px;color:#262626;font-weight:400;">Slide 1 of 2</div>
<div class="t" style="left:163.35px;top:988px;font-size:15.66px;letter-spacing:0.0px;color:#262626;font-weight:400;">English (Nigeria)</div>
<div class="t" style="left:329.2px;top:988px;font-size:15.74px;letter-spacing:0.0px;color:#262626;font-weight:700;">Accessibility: Investigate</div>
<div class="t" style="left:1498.55px;top:988px;font-size:15.5px;letter-spacing:0.255px;color:#262626;font-weight:400;">60%</div>
</body></html>
